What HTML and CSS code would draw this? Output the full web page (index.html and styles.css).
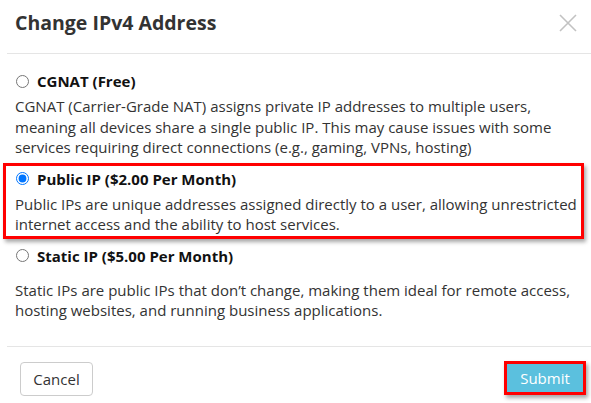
FILE: index.html
```html
<!DOCTYPE html>
<html lang="en">
<head>
    <meta charset="UTF-8">
    <meta name="viewport" content="width=device-width, initial-scale=1.0">
    <title>Change IPv4 Address</title>
    <link rel="stylesheet" href="styles.css">
</head>
<body>
    <div class="modal">
        <div class="modal-header">
            <h2>Change IPv4 Address</h2>
            <svg class="close" width="18" height="18" viewBox="0 0 18 18">
                <path d="M1 1 L17 17 M17 1 L1 17" stroke="#c2c2c2" stroke-width="1.6" fill="none"/>
            </svg>
        </div>
        <div class="modal-body">
            <div class="option">
                <label><input type="radio" name="ip"> CGNAT (Free)</label>
                <p>CGNAT (Carrier-Grade NAT) assigns private IP addresses to multiple users, meaning all devices share a single public IP. This may cause issues with some services requiring direct connections (e.g., gaming, VPNs, hosting)</p>
            </div>
            <div class="option selected">
                <label><input type="radio" name="ip" checked> Public IP ($2.00 Per Month)</label>
                <p>Public IPs are unique addresses assigned directly to a user, allowing unrestricted internet access and the ability to host services.</p>
            </div>
            <div class="option static">
                <label><input type="radio" name="ip"> Static IP ($5.00 Per Month)</label>
                <p>Static IPs are public IPs that don’t change, making them ideal for remote access, hosting websites, and running business applications.</p>
            </div>
        </div>
        <div class="modal-footer">
            <button class="cancel">Cancel</button>
            <button class="submit">Submit</button>
        </div>
    </div>
</body>
</html>
```

FILE: styles.css
```css
body {
    margin: 0;
    background-color: #fff;
    font-family: "Open Sans", sans-serif;
    color: #333;
}

.modal {
    width: 591px;
    height: 403px;
    overflow: hidden;
}

.modal-header {
    display: flex;
    justify-content: space-between;
    align-items: flex-start;
    height: 54px;
    box-sizing: border-box;
    margin-left: 7px;
    padding: 11px 14px 0 8px;
    border-bottom: 1px solid #e5e5e5;
}

.modal-header h2 {
    margin: 0;
    font-size: 19.5px;
    line-height: 24px;
    font-weight: 700;
    color: #333;
}

.close {
    margin-top: 3px;
}

.modal-body {
    padding: 17px 11px 0 15px;
}

.option label {
    display: flex;
    align-items: center;
    font-weight: 700;
    font-size: 15px;
    color: #111;
    height: 20px;
}

.option input {
    margin: 0 8px 0 1px;
    width: 13px;
    height: 13px;
}

.option p {
    margin: 5px 0 0;
    font-size: 15px;
    line-height: 20.5px;
    color: #333;
}

.option.selected {
    margin: 5px -4px 0 -12px;
    padding: 3px 0 1px 9px;
    border: 3px solid #f00;
    box-shadow: 2px 3px 4px rgba(0, 0, 0, 0.35);
}

.option.static {
    margin-top: 7px;
}

.option.static p {
    margin-top: 14px;
}

.modal-footer {
    display: flex;
    justify-content: space-between;
    align-items: flex-start;
    margin: 25px 0 0 7px;
    padding: 15px 5px 0 13px;
    border-top: 1px solid #e5e5e5;
}

button {
    font-family: "Open Sans", sans-serif;
    font-size: 15px;
    cursor: pointer;
    height: 34px;
    box-sizing: border-box;
}

.cancel {
    background-color: #fff;
    color: #333;
    border: 1px solid #ccc;
    border-radius: 4px;
    padding: 0 12px;
    width: 73px;
}

.submit {
    margin-top: -1px;
    background-color: #5bc0de;
    color: #fff;
    border: 3px solid #f00;
    padding: 0 11px;
    width: 82px;
    box-shadow: 2px 3px 4px rgba(0, 0, 0, 0.35);
}
```
